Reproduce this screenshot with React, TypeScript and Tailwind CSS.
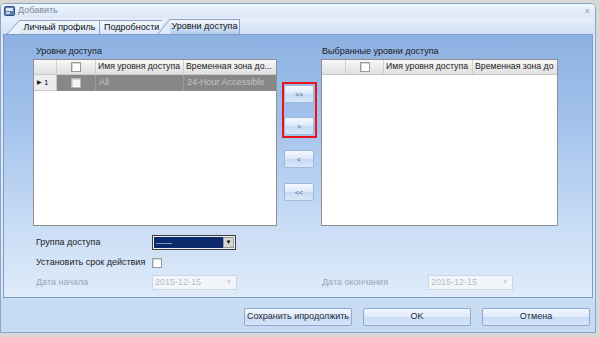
import React from "react";

const font = { fontFamily: '"Liberation Sans", Arial, sans-serif' };

function Check({ dim = false }: { dim?: boolean }) {
  return (
    <div
      className={`w-[10px] h-[10px] border ${dim ? "border-[#b9b9b9] bg-[#f4f4f4]" : "border-[#9a9a9a] bg-white"} shadow-[inset_1px_1px_0_#d8d8d8]`}
    />
  );
}

function GridHeader({ cols }: { cols: { w: string; label?: string; check?: boolean }[] }) {
  return (
    <div className="flex h-[15px] bg-[linear-gradient(180deg,#f7f7f7,#e0e0e0)] border-b border-[#c9c9c9]">
      {cols.map((c, i) => (
        <div
          key={i}
          className={`${c.w} shrink-0 flex items-center ${c.check ? "justify-center" : "pl-[2px]"} border-r border-[#cfcfcf] whitespace-nowrap text-[8.7px] text-[#222]`}
        >
          {c.check ? <Check /> : c.label}
        </div>
      ))}
    </div>
  );
}

function MidBtn({ label }: { label: string }) {
  return (
    <div className="w-[30px] h-[18px] rounded-[2px] border border-[#9fb7d9] bg-[linear-gradient(180deg,#f4f8fe_0%,#dce9f9_50%,#c5daf4_51%,#d8e7f9_100%)] flex items-center justify-center text-[7px] text-[#4d6585] leading-none">
      {label}
    </div>
  );
}

function BottomBtn({ label, w }: { label: string; w: string }) {
  return (
    <div
      className={`${w} h-[18px] rounded-[2px] border border-[#8fa9cc] bg-[linear-gradient(180deg,#f0f5fd_0%,#dfeafa_50%,#c9dcf4_51%,#d6e5f8_100%)] flex items-center justify-center text-[9px] text-[#1e2a3a]`}
    >
      {label}
    </div>
  );
}

function DateBox() {
  return (
    <div className="w-[85px] h-[15px] border border-[#cdd6e2] bg-[#f2f6fb] flex items-center justify-between px-[2px] text-[9px] text-[#b5bcc6]">
      <span>2015-12-15</span>
      <span className="text-[6px] text-[#c5ccd5] pr-[2px]">▼</span>
    </div>
  );
}

export default function App() {
  return (
    <div
      className="w-[600px] h-[337px] bg-[#d8d8d8] pt-[3px] pr-[4px] pb-[4px] overflow-hidden"
      style={font}
    >
      <div className="w-full h-full flex flex-col rounded-t-[5px] border border-[#8aa4c7] bg-[#dbe7f7] overflow-hidden">
        {/* title bar */}
        <div className="h-[14px] shrink-0 flex items-center justify-between bg-[linear-gradient(180deg,#eef5fd,#dae7f8)] pl-[3px] pr-[5px]">
          <div className="flex items-center gap-[3px]">
            <svg width="11" height="10" viewBox="0 0 11 10">
              <rect x="0.5" y="0.5" width="10" height="9" rx="1" fill="#5b7fb2" stroke="#34507c" />
              <rect x="2" y="2" width="7" height="3" fill="#dfe9f6" />
              <rect x="2" y="6" width="4" height="2" fill="#c8d8ee" />
            </svg>
            <span className="text-[9px] text-[#7b8799]">Добавить</span>
          </div>
          <span className="text-[9px] text-[#8d98a8] leading-none">×</span>
        </div>
        {/* tabs */}
        <div className="h-[16px] shrink-0 flex items-end bg-[linear-gradient(180deg,#e6effb,#d3e1f5)] pl-[6px]">
          <div className="flex items-end h-[14px]">
            <svg width="13" height="14" viewBox="0 0 13 14" className="shrink-0">
              <path d="M0 14 L12 1 L13 0 L13 14 Z" fill="#e8f0fb" />
              <path d="M0 14 L12 1 L13 0.5" fill="none" stroke="#8aa1c2" />
            </svg>
            <div className="h-[14px] w-[80px] border-t border-r border-[#8aa1c2] bg-[linear-gradient(180deg,#f3f7fd,#d9e5f7)] flex items-center justify-center text-[9px] text-[#111]">
              Личный профиль
            </div>
            <div className="h-[14px] w-[62px] border-t border-[#8aa1c2] bg-[linear-gradient(180deg,#f3f7fd,#d9e5f7)] flex items-center pl-[4px] text-[9px] text-[#111] overflow-hidden whitespace-nowrap">
              Подробности
            </div>
          </div>
          <div className="flex items-end h-[15px] -ml-[4px]">
            <svg width="12" height="15" viewBox="0 0 12 15" className="shrink-0">
              <path d="M0 15 L11 1 L12 0 L12 15 Z" fill="#dfeafa" />
              <path d="M0 15 L11 1 L12 0.5" fill="none" stroke="#8aa1c2" />
            </svg>
            <div className="h-[15px] w-[70px] border-t border-r border-[#8aa1c2] bg-[linear-gradient(180deg,#f6f9fe,#b3cdee)] flex items-center justify-center text-[9px] text-[#111]">
              Уровни доступа
            </div>
          </div>
        </div>
        {/* panel */}
        <div className="h-[264px] shrink-0 mx-[2px] border border-[#7f9cc6] bg-[linear-gradient(180deg,#8cb1e2_0%,#a4c3ec_35%,#c6dbf5_70%,#dfebfa_100%)] pl-[29px] pt-[10px]">
          <div className="flex">
            {/* left list */}
            <div className="w-[244px] shrink-0 flex flex-col">
              <div className="h-[14px] text-[9px] text-[#1c1c1c] pl-[3px]">Уровни доступа</div>
              <div className="h-[167px] border border-[#8f8f8f] bg-white">
                <GridHeader
                  cols={[
                    { w: "w-[23px]" },
                    { w: "w-[39px]", check: true },
                    { w: "w-[88px] overflow-hidden", label: "Имя уровня доступа" },
                    { w: "w-[92px] border-r-0 overflow-hidden", label: "Временная зона до..." },
                  ]}
                />
                <div className="flex h-[16px]">
                  <div className="w-[23px] shrink-0 bg-[#ececec] border-r border-b border-[#c9c9c9] flex items-center pl-[3px] gap-[2px] text-[8px] text-[#111]">
                    <span className="text-[6px]">▶</span>1
                  </div>
                  <div className="w-[39px] shrink-0 bg-[#878787] flex items-center justify-center border-r border-[#9c9c9c]">
                    <Check dim />
                  </div>
                  <div className="w-[88px] shrink-0 bg-[#878787] flex items-center pl-[3px] text-[9px] text-[#c4c4c4] border-r border-[#9c9c9c]">
                    All
                  </div>
                  <div className="flex-1 bg-[#878787] flex items-center pl-[3px] text-[9px] text-[#c4c4c4] whitespace-nowrap overflow-hidden">
                    24-Hour Accessible
                  </div>
                </div>
              </div>
            </div>
            {/* middle buttons */}
            <div className="w-[44px] shrink-0 flex flex-col items-center pt-[37px]">
              <div className="w-[35px] h-[56px] border-[2px] border-[#e8141c] flex flex-col items-center justify-between py-[1px]">
                <MidBtn label=">>" />
                <MidBtn label=">" />
              </div>
              <div className="mt-[12px]">
                <MidBtn label="<" />
              </div>
              <div className="mt-[15px]">
                <MidBtn label="<<" />
              </div>
            </div>
            {/* right list */}
            <div className="w-[237px] shrink-0 flex flex-col">
              <div className="h-[14px] text-[9px] text-[#1c1c1c] pl-[1px]">Выбранные уровни доступа</div>
              <div className="h-[167px] border border-[#8f8f8f] bg-white">
                <GridHeader
                  cols={[
                    { w: "w-[24px]" },
                    { w: "w-[38px]", check: true },
                    { w: "w-[89px] overflow-hidden", label: "Имя уровня доступа" },
                    { w: "flex-1 border-r-0", label: "Временная зона до" },
                  ]}
                />
              </div>
            </div>
          </div>
          {/* form rows */}
          <div className="flex flex-col mt-[9px] text-[9px]">
            <div className="flex items-center h-[15px]">
              <div className="w-[119px] pl-[3px] text-[#1c1c1c]">Группа доступа</div>
              <div className="w-[84px] h-[15px] border border-[#3c3c3c] bg-[#f0f0f0] p-[1px] flex">
                <div className="flex-1 bg-[#0b2a6b] text-white text-[8px] leading-[11px] pl-[2px]">------</div>
                <div className="w-[11px] bg-[#d6d6d6] border border-[#9a9a9a] flex items-center justify-center text-[6px] text-black">▼</div>
              </div>
            </div>
            <div className="flex items-center h-[15px] mt-[5px]">
              <div className="w-[119px] pl-[3px] text-[#1c1c1c]">Установить срок действия</div>
              <Check />
            </div>
            <div className="flex items-center h-[15px] mt-[5px]">
              <div className="w-[119px] pl-[3px] text-[#9aa5b4]">Дата начала</div>
              <DateBox />
              <div className="w-[84px]" />
              <div className="w-[107px] pl-[1px] text-[#9aa5b4]">Дата окончания</div>
              <DateBox />
            </div>
          </div>
        </div>
        {/* bottom bar */}
        <div className="flex-1 flex items-center justify-end gap-[11px] pr-[5px] bg-[#c7dbf3] pt-[3px]">
          <BottomBtn label="Сохранить ипродолжить" w="w-[108px]" />
          <BottomBtn label="OK" w="w-[108px]" />
          <BottomBtn label="Отмена" w="w-[108px]" />
        </div>
      </div>
    </div>
  );
}
